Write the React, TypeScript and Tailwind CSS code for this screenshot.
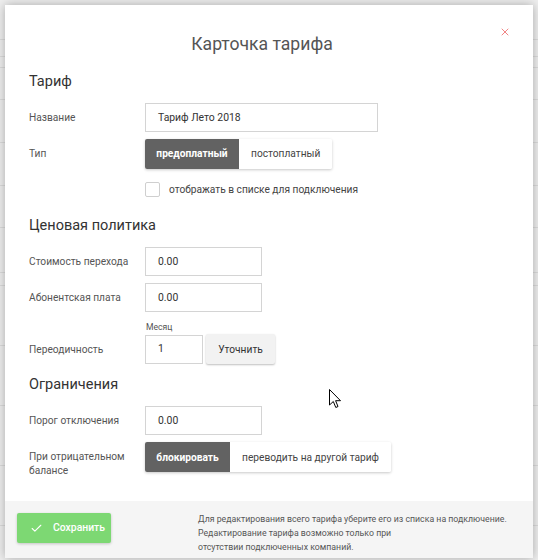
import { Check, X } from 'lucide-react'

const font = { fontFamily: 'Roboto, "Noto Sans", Arial, sans-serif' }

const bgLines = [40, 17, 11, 32, 43, 43, 42, 45, 13, 60, 60, 60, 60, 60]

function Label({ children }: { children: React.ReactNode }) {
  return <div className="w-[116px] shrink-0 whitespace-nowrap text-[10.2px] text-[#555]">{children}</div>
}

function Field({ value, w }: { value: string; w: string }) {
  return (
    <div className={`${w} h-[29px] border border-[#d4d4d4] bg-white flex items-center px-[12px] text-[10.4px] text-[#333]`}>
      {value}
    </div>
  )
}

function Segmented({ active, other, activeW }: { active: string; other: string; activeW: string }) {
  return (
    <div className="flex h-[30px] rounded-[2px] shadow-[0_1px_3px_rgba(0,0,0,0.22)] overflow-hidden text-[10.2px] whitespace-nowrap">
      <div className={`${activeW} bg-[#626262] text-white font-bold flex items-center justify-center`}>{active}</div>
      <div className="bg-white text-[#444] flex items-center px-[12px]">{other}</div>
    </div>
  )
}

export default function App() {
  return (
    <div className="relative w-[538px] h-[560px] overflow-hidden bg-[#efefef]" style={font}>
      {/* page behind the modal */}
      <div className="flex flex-col">
        {bgLines.map((h, i) => (
          <div key={i} className="border-b border-[#dcdcdc]" style={{ height: h }} />
        ))}
      </div>

      {/* modal */}
      <div className="absolute left-[5px] top-[5px] w-[528px] bg-white shadow-[0_0_10px_rgba(0,0,0,0.3)]">
        <button className="absolute right-[22px] top-[21px] text-[#ee6464]">
          <X className="w-[12px] h-[12px]" strokeWidth={1.6} />
        </button>

        <div className="px-[24px] pt-[27px] pb-[23px]">
          <h2 className="pr-[14px] text-center text-[17.6px] leading-[24px] text-[#555]">Карточка тарифа</h2>

          <h3 className="mt-[16px] text-[14.5px] leading-[20px] text-[#333]">Тариф</h3>
          <div className="mt-[11px] flex items-center">
            <Label>Название</Label>
            <Field value="Тариф Лето 2018" w="w-[233px]" />
          </div>
          <div className="mt-[7px] flex items-center">
            <Label>Тип</Label>
            <Segmented active="предоплатный" other="постоплатный" activeW="w-[94px]" />
          </div>
          <div className="mt-[13px] flex items-center">
            <div className="w-[116px] shrink-0" />
            <div className="w-[15px] h-[15px] border border-[#cfcfcf] rounded-[2px] bg-white" />
            <span className="ml-[9px] text-[10.2px] text-[#444]">отображать в списке для подключения</span>
          </div>

          <h3 className="mt-[19px] text-[14.5px] leading-[20px] text-[#333]">Ценовая политика</h3>
          <div className="mt-[11px] flex items-center">
            <Label>Стоимость перехода</Label>
            <Field value="0.00" w="w-[117px]" />
          </div>
          <div className="mt-[7px] flex items-center">
            <Label>Абонентская плата</Label>
            <Field value="0.00" w="w-[117px]" />
          </div>
          <div className="mt-[9px] pl-[117px] text-[8.6px] leading-[12px] text-[#555]">Месяц</div>
          <div className="mt-[1px] flex items-center">
            <Label>Переодичность</Label>
            <Field value="1" w="w-[58px]" />
            <button className="ml-[3px] w-[69px] h-[30px] rounded-[2px] bg-[#f2f2f2] shadow-[0_1px_2px_rgba(0,0,0,0.25)] text-[10.2px] text-[#333]">
              Уточнить
            </button>
          </div>

          <h3 className="mt-[11px] text-[14.5px] leading-[20px] text-[#333]">Ограничения</h3>
          <div className="mt-[11px] flex items-center">
            <Label>Порог отключения</Label>
            <Field value="0.00" w="w-[117px]" />
          </div>
          <div className="mt-[7px] flex items-start">
            <div className="w-[116px] shrink-0 pt-[8px] text-[10.2px] leading-[14px] text-[#555]">
              При отрицательном
              <br />
              балансе
            </div>
            <Segmented active="блокировать" other="переводить на другой тариф" activeW="w-[85px]" />
          </div>
        </div>

        {/* footer */}
        <div className="bg-[#f5f5f5] h-[57px] flex items-start pl-[12px] pt-[12px]">
          <button className="w-[94px] h-[30px] shrink-0 rounded-[2px] bg-[#7dd873] shadow-[0_1px_3px_rgba(0,0,0,0.2)] flex items-center pl-[13px] text-white text-[10.4px] font-medium">
            <Check className="w-[13px] h-[13px]" strokeWidth={2} />
            <span className="ml-[10px]">Сохранить</span>
          </button>
          <div className="ml-[87px] -mt-[1px] whitespace-nowrap text-[8.75px] leading-[14px] text-[#555]">
            Для редактирования всего тарифа уберите его из списка на подключение.
            <br />
            Редактирование тарифа возможно только при
            <br />
            отсутствии подключенных компаний.
          </div>
        </div>
      </div>

      {/* mouse pointer */}
      <svg className="absolute left-[329px] top-[389px]" width="13" height="20" viewBox="0 0 13 20">
        <path d="M0.5 0.5 L0.5 16 L4.3 12.5 L6.8 18.5 L9 17.5 L6.6 11.7 L11.5 11.7 Z" fill="white" stroke="black" strokeWidth="1" />
      </svg>
    </div>
  )
}
